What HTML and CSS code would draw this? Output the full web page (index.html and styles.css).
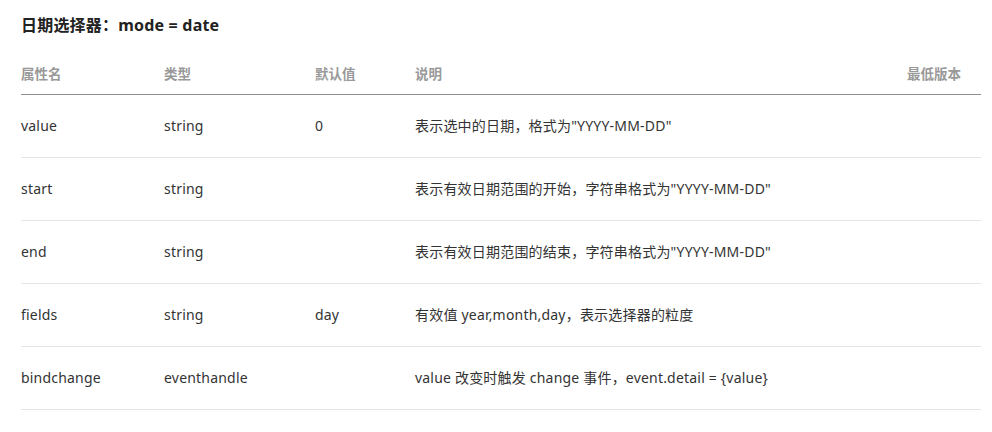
FILE: index.html
```html
<!DOCTYPE html>
<html>
<head lang="zh-CN">
    <meta charset="UTF-8">
    <title>picker mode = date</title>
    <link rel="stylesheet" href="styles.css">
</head>
<body>
<div class="doc">
    <h3 class="title">日期选择器：mode = date</h3>
    <div class="table">
        <div class="row head">
            <span>属性名</span>
            <span>类型</span>
            <span>默认值</span>
            <span>说明</span>
            <span>最低版本</span>
        </div>
        <div class="row">
            <span>value</span>
            <span>string</span>
            <span>0</span>
            <span>表示选中的日期，格式为"YYYY-MM-DD"</span>
            <span></span>
        </div>
        <div class="row">
            <span>start</span>
            <span>string</span>
            <span></span>
            <span>表示有效日期范围的开始，字符串格式为"YYYY-MM-DD"</span>
            <span></span>
        </div>
        <div class="row">
            <span>end</span>
            <span>string</span>
            <span></span>
            <span>表示有效日期范围的结束，字符串格式为"YYYY-MM-DD"</span>
            <span></span>
        </div>
        <div class="row">
            <span>fields</span>
            <span>string</span>
            <span>day</span>
            <span>有效值 year,month,day，表示选择器的粒度</span>
            <span></span>
        </div>
        <div class="row">
            <span>bindchange</span>
            <span>eventhandle</span>
            <span></span>
            <span>value 改变时触发 change 事件，event.detail = {value}</span>
            <span></span>
        </div>
    </div>
</div>
</body>
</html>
```

FILE: styles.css
```css
* {
    margin: 0;
    padding: 0;
}

body {
    font-family: "Noto Sans", "Noto Sans CJK SC", sans-serif;
    color: #333;
    background: #fff;
}

.doc {
    padding: 13px 11px 0 21px;
}

.title {
    font-size: 16px;
    line-height: 24px;
    font-weight: bold;
    color: #222;
    margin-bottom: 15px;
    letter-spacing: 0.2px;
}

.row {
    display: grid;
    grid-template-columns: 143px 151px 100px 1fr 74px;
    align-items: center;
    box-sizing: border-box;
    height: 63px;
    padding-bottom: 2px;
    border-bottom: 1px solid #e5e5e5;
    font-size: 14px;
    letter-spacing: 0.2px;
}

.row.head {
    height: 43px;
    padding-bottom: 0;
    border-bottom-color: #8c8c8c;
    font-size: 13.5px;
    font-weight: bold;
    color: #999;
    letter-spacing: 0;
}
```
